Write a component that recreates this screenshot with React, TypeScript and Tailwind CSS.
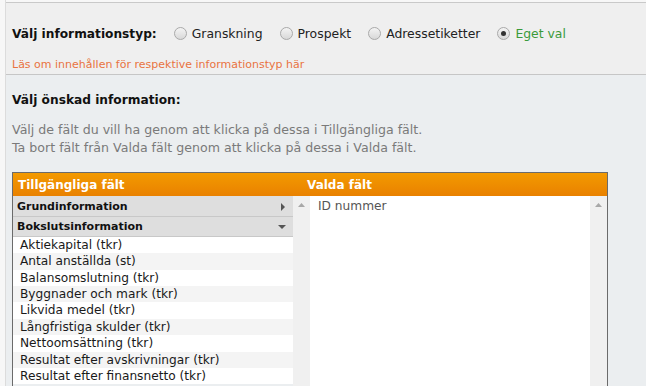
import React from "react";

const items = [
  "Aktiekapital (tkr)",
  "Antal anställda (st)",
  "Balansomslutning (tkr)",
  "Byggnader och mark (tkr)",
  "Likvida medel (tkr)",
  "Långfristiga skulder (tkr)",
  "Nettoomsättning (tkr)",
  "Resultat efter avskrivningar (tkr)",
  "Resultat efter finansnetto (tkr)",
];

function Radio({ checked }: { checked?: boolean }) {
  return (
    <span className="inline-flex h-[13px] w-[13px] items-center justify-center rounded-full border border-[#a9a9a9] bg-gradient-to-b from-[#f4f4f4] to-[#d8d8d8]">
      {checked && <span className="h-[5px] w-[5px] rounded-full bg-[#333]" />}
    </span>
  );
}

function UpArrow() {
  return (
    <svg width="7" height="4" viewBox="0 0 7 4">
      <path d="M0 4 L3.5 0 L7 4 Z" fill="#a8a8a8" />
    </svg>
  );
}

export default function App() {
  return (
    <div
      className="flex h-[386px] w-[646px] overflow-hidden bg-[#f7f7f7]"
      style={{ fontFamily: '"DejaVu Sans", Verdana, sans-serif' }}
    >
      <div className="w-[6px] shrink-0 border-r border-[#dcdcdc]" />
      <div className="mt-[2px] flex flex-1 flex-col border-t border-[#c9c9c9]">
        <div className="h-[76px] border-b border-[#c6c6c6] bg-[#efefef] pl-[6px]">
          <div className="flex h-[58px] items-center pt-[4px]">
            <span className="mr-[17px] text-[12.2px] font-bold text-[#111]">Välj informationstyp:</span>
            <label className="mr-[17px] flex items-center gap-[5px] text-[12.4px] text-[#222]">
              <Radio /> Granskning
            </label>
            <label className="mr-[17px] flex items-center gap-[5px] text-[12.4px] text-[#222]">
              <Radio /> Prospekt
            </label>
            <label className="mr-[17px] flex items-center gap-[5px] text-[12.4px] text-[#222]">
              <Radio /> Adressetiketter
            </label>
            <label className="flex items-center gap-[5px] text-[12.4px] text-[#3a9a3a]">
              <Radio checked /> Eget val
            </label>
          </div>
          <div className="-mt-[4px] text-[11px] text-[#e9733f]">Läs om innehållen för respektive informationstyp här</div>
        </div>
        <div className="flex-1 bg-[#ebeef0] pl-[6px]">
          <div className="pt-[16px] text-[12.2px] font-bold text-[#111]">Välj önskad information:</div>
          <div className="mt-[12px] text-[12.6px] leading-[18px] text-[#7a7a7a]">
            <div>Välj de fält du vill ha genom att klicka på dessa i Tillgängliga fält.</div>
            <div>Ta bort fält från Valda fält genom att klicka på dessa i Valda fält.</div>
          </div>
          <div className="mt-[15px] w-[596px] border border-[#6b6b6b] border-b-0">
            <div className="flex h-[23px] items-center bg-gradient-to-b from-[#f39a00] to-[#e98100] pt-[1px] text-[12px] font-bold text-white">
              <span className="w-[294px] pl-[5px]">Tillgängliga fält</span>
              <span>Valda fält</span>
            </div>
            <div className="flex h-[200px]">
              <div className="w-[280px]">
                <div className="flex h-[21px] items-center justify-between border-b border-[#c8c8c8] bg-[#dedede] pl-[4px] pr-[8px] pt-[2px] text-[11px] font-bold text-[#111]">
                  <span>Grundinformation</span>
                  <svg width="4" height="8" viewBox="0 0 4 8"><path d="M0 0 L4 4 L0 8 Z" fill="#555" /></svg>
                </div>
                <div className="flex h-[20px] items-center justify-between border-b border-[#c8c8c8] bg-[#dedede] pl-[4px] pr-[7px] pt-[2px] text-[11px] font-bold text-[#111]">
                  <span>Bokslutsinformation</span>
                  <svg width="8" height="4" viewBox="0 0 8 4"><path d="M0 0 L8 0 L4 4 Z" fill="#555" /></svg>
                </div>
                {items.map((t, i) => (
                  <div
                    key={t}
                    className={`h-[16.4px] pl-[7px] text-[12.2px] leading-[17px] text-[#1a1a1a] ${i % 2 === 1 ? "bg-[#f4f4f4]" : "bg-white"}`}
                  >
                    {t}
                  </div>
                ))}
              </div>
              <div className="flex w-[17px] justify-center bg-[#f0f0f0] pt-[7px]">
                <UpArrow />
              </div>
              <div className="flex-1 bg-white pl-[8px] pt-[1px] text-[12.2px] text-[#555]">ID nummer</div>
              <div className="flex w-[17px] justify-center bg-[#f0f0f0] pt-[7px]">
                <UpArrow />
              </div>
            </div>
          </div>
        </div>
      </div>
    </div>
  );
}
